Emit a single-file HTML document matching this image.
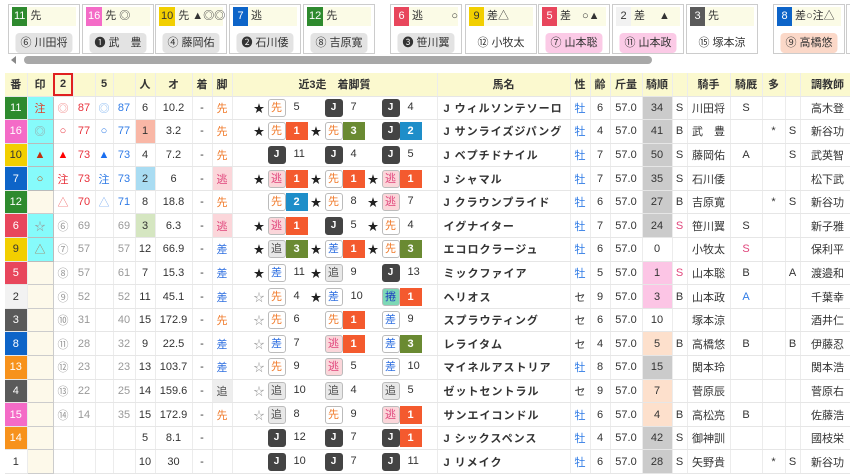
<!DOCTYPE html>
<html><head><meta charset="utf-8"><style>
*{box-sizing:border-box;margin:0;padding:0}
body{width:850px;height:475px;overflow:hidden;background:#fff;font-family:"Liberation Sans","Noto Sans CJK JP",sans-serif;font-size:11px;color:#333;position:relative}
.card{position:absolute;top:4px;width:72px;height:50px;border:1px solid #ccc;background:#fff}
.card .t{position:absolute;left:3px;right:3px;top:2px;height:19px;background:#fbfbe6;font-size:11px;line-height:19px;white-space:nowrap}
.card .t b{display:inline-block;min-width:15px;height:19px;text-align:center;font-weight:normal;margin-right:3px;padding:0 2px}
.card .p{position:absolute;top:28px;left:50%;transform:translateX(-50%);height:20px;line-height:20px;padding:0 5px;border-radius:4px;font-size:11px;white-space:nowrap}
.g{background:#e3e3e3}.pk{background:#fbcae6}.pc{background:#fbd8c8}
.sb{position:absolute;top:56px;left:24px;width:628px;height:8px;border-radius:4px;background:#a8a8a8}
.arr{position:absolute;top:56px;left:11px;width:0;height:0;border-top:4px solid transparent;border-bottom:4px solid transparent;border-right:5px solid #888}
table{position:absolute;left:5px;top:73px;border-collapse:collapse;table-layout:fixed;width:850px}
td,th{height:23.6px;text-align:center;border-bottom:1px solid #e6e6e6;border-right:1px solid #ececec;white-space:nowrap;overflow:hidden;padding:0;font-weight:normal;font-size:11px}
th{background:#fbf9cf;height:23px;font-weight:bold;color:#333}
.n{color:#fff}
.w1{background:#fff;color:#333}.w2{background:#f2f2f2;color:#333}.w3{background:#5a5a5a}.w4{background:#5a5a5a}
.w5,.w6{background:#e8465c}.w7,.w8{background:#0d64c8}.w9,.w10{background:#f2cf00;color:#333}.w11,.w12{background:#2e8a2e}.w13,.w14{background:#f7921c}.w15,.w16{background:#f46bc7}
.cy{background:#86fbfb;border:1px solid #bbb}.cr{background:#fdf9ea;border:1px solid #ccc}
.r{color:#e8323c}.b{color:#2f7be6}.gr{color:#999}.o{color:#f07a2a}.bl{color:#2f6fe0}.pkc{color:#e0457b}
.runs{text-align:left;padding-left:20px}
.s{display:inline-block;width:57px;height:20px;vertical-align:middle;position:relative}
.s i{position:absolute;left:0;top:2px;font-style:normal;font-size:11px;width:13px;text-align:center;color:#222}
.s .bx{position:absolute;left:15px;top:1px;width:18px;height:18px;border:1px solid #bbb;border-radius:3px;line-height:16px;text-align:center;font-size:11px;background:#fff}
.bx.J{background:#444;color:#fff;border-color:#444;font-weight:bold;font-size:10px}
.bx.nige{background:#fbd6da;color:#e0457b}.bx.sen{color:#f07a2a}.bx.sa{color:#2f6fe0}.bx.oi{background:#e8e8e8;color:#555}.bx.ma{background:#7dd8b6;color:#2040c0}
.s .rs{position:absolute;left:33px;top:1px;width:22px;height:18px;line-height:18px;text-align:center;color:#fff;font-weight:bold}
.s .nm{position:absolute;left:41px;top:3px}
.r1{background:#f45a2e}.r2{background:#1e8ec9}.r3{background:#6a8a32}
.nmL{text-align:left;padding-left:6px;font-weight:bold;letter-spacing:1px}
.gy{background:#cbcbcb}.pkb{background:#fcc5e5}.pcb{background:#fde0cc}
</style></head><body>
<div class="card" style="left:8px"><div class="t"><b class="w11 n">11</b>先</div><div class="p g">⑥ 川田将</div></div>
<div class="card" style="left:82px"><div class="t"><b class="w16 n">16</b>先 ◎</div><div class="p g">❶ 武　豊</div></div>
<div class="card" style="left:155px"><div class="t"><b class="w10">10</b>先 ▲◎◎</div><div class="p g">④ 藤岡佑</div></div>
<div class="card" style="left:229px"><div class="t"><b class="w7 n">7</b>逃</div><div class="p g">❷ 石川倭</div></div>
<div class="card" style="left:303px"><div class="t"><b class="w12 n">12</b>先</div><div class="p g">⑧ 吉原寛</div></div>
<div class="card" style="left:390px"><div class="t"><b class="w6 n">6</b>逃<span style="float:right">○</span></div><div class="p g">❸ 笹川翼</div></div>
<div class="card" style="left:465px"><div class="t"><b class="w9">9</b>差△</div><div class="p">⑫ 小牧太</div></div>
<div class="card" style="left:538px"><div class="t"><b class="w5 n">5</b>差　○▲</div><div class="p pk">⑦ 山本聡</div></div>
<div class="card" style="left:612px"><div class="t"><b class="w2">2</b>差　 ▲</div><div class="p pk">⑪ 山本政</div></div>
<div class="card" style="left:686px"><div class="t"><b class="w3 n">3</b>先</div><div class="p">⑮ 塚本涼</div></div>
<div class="card" style="left:773px"><div class="t"><b class="w8 n">8</b>差○注△</div><div class="p pc">⑨ 高橋悠</div></div>
<div class="card" style="left:846px"></div>
<div class="arr"></div><div class="sb"></div>
<table>
<colgroup><col style="width:22px"><col style="width:26px"><col style="width:20px"><col style="width:22px"><col style="width:18px"><col style="width:22px"><col style="width:20px"><col style="width:37px"><col style="width:20px"><col style="width:20px"><col style="width:205px"><col style="width:133px"><col style="width:20px"><col style="width:20px"><col style="width:32px"><col style="width:30px"><col style="width:15px"><col style="width:43px"><col style="width:32px"><col style="width:23px"><col style="width:15px"><col style="width:55px"></colgroup>
<tr><th>番</th><th>印</th><th style="outline:2px solid #e02020;outline-offset:-2px">2</th><th></th><th>5</th><th></th><th>人</th><th>オ</th><th>着</th><th>脚</th><th>近3走　着脚質</th><th>馬名</th><th>性</th><th>齢</th><th>斤量</th><th>騎順</th><th></th><th>騎手</th><th>騎厩</th><th>多</th><th></th><th>調教師</th></tr>
<tr><td class="w11 n">11</td><td class="cy" style="color:#e0402a">注</td><td class="r" style="color:#f08080">◎</td><td class="r">87</td><td class="b" style="color:#7ab0f0">◎</td><td class="b">87</td><td>6</td><td>10.2</td><td>-</td><td class="o">先</td><td class="runs"><span class="s"><i>★</i><span class="bx sen">先</span><span class="nm">5</span></span><span class="s"><span class="bx J">J</span><span class="nm">7</span></span><span class="s"><span class="bx J">J</span><span class="nm">4</span></span></td><td class="nmL">J ウィルソンテソーロ</td><td class="b">牡</td><td>6</td><td>57.0</td><td class="gy">34</td><td>S</td><td>川田将</td><td>S</td><td></td><td></td><td>高木登</td></tr>
<tr><td class="w16 n">16</td><td class="cy gr">◎</td><td class="r">○</td><td class="r">77</td><td class="b">○</td><td class="b">77</td><td style="background:#f9b7a6">1</td><td>3.2</td><td>-</td><td class="o">先</td><td class="runs"><span class="s"><i>★</i><span class="bx sen">先</span><span class="rs r1">1</span></span><span class="s"><i>★</i><span class="bx sen">先</span><span class="rs r3">3</span></span><span class="s"><span class="bx J">J</span><span class="rs r2">2</span></span></td><td class="nmL">J サンライズジパング</td><td class="b">牡</td><td>4</td><td>57.0</td><td class="gy">41</td><td>B</td><td>武　豊</td><td></td><td>*</td><td>S</td><td>新谷功</td></tr>
<tr><td class="w10">10</td><td class="cy" style="color:#c03010">▲</td><td style="color:#f00">▲</td><td class="r">73</td><td style="color:#1a6ef0">▲</td><td class="b">73</td><td>4</td><td>7.2</td><td>-</td><td class="o">先</td><td class="runs"><span class="s"><span class="bx J">J</span><span class="nm">11</span></span><span class="s"><span class="bx J">J</span><span class="nm">4</span></span><span class="s"><span class="bx J">J</span><span class="nm">5</span></span></td><td class="nmL">J ベプチドナイル</td><td class="b">牡</td><td>7</td><td>57.0</td><td class="gy">50</td><td>S</td><td>藤岡佑</td><td>A</td><td></td><td>S</td><td>武英智</td></tr>
<tr><td class="w7 n">7</td><td class="cy" style="color:#c05010">○</td><td class="r">注</td><td class="r">73</td><td class="b">注</td><td class="b">73</td><td style="background:#a9dcf2">2</td><td>6</td><td>-</td><td class="pkc" style="background:#fbd6da">逃</td><td class="runs"><span class="s"><i>★</i><span class="bx nige">逃</span><span class="rs r1">1</span></span><span class="s"><i>★</i><span class="bx sen">先</span><span class="rs r1">1</span></span><span class="s"><i>★</i><span class="bx nige">逃</span><span class="rs r1">1</span></span></td><td class="nmL">J シャマル</td><td class="b">牡</td><td>7</td><td>57.0</td><td class="gy">35</td><td>S</td><td>石川倭</td><td></td><td></td><td></td><td>松下武</td></tr>
<tr><td class="w12 n">12</td><td class="cr"></td><td style="color:#f07070">△</td><td class="r">70</td><td style="color:#80b0f0">△</td><td class="b">71</td><td>8</td><td>18.8</td><td>-</td><td class="o">先</td><td class="runs"><span class="s"><span class="bx sen">先</span><span class="rs r2">2</span></span><span class="s"><i>★</i><span class="bx sen">先</span><span class="nm">8</span></span><span class="s"><i>★</i><span class="bx nige">逃</span><span class="nm">7</span></span></td><td class="nmL">J クラウンプライド</td><td class="b">牡</td><td>6</td><td>57.0</td><td class="gy">27</td><td>B</td><td>吉原寛</td><td></td><td>*</td><td>S</td><td>新谷功</td></tr>
<tr><td class="w6 n">6</td><td class="cy gr">☆</td><td class="gr">⑥</td><td class="gr">69</td><td></td><td class="gr">69</td><td style="background:#d5e6c1">3</td><td>6.3</td><td>-</td><td class="pkc" style="background:#fbd6da">逃</td><td class="runs"><span class="s"><i>★</i><span class="bx nige">逃</span><span class="rs r1">1</span></span><span class="s"><span class="bx J">J</span><span class="nm">5</span></span><span class="s"><i>★</i><span class="bx sen">先</span><span class="nm">4</span></span></td><td class="nmL">イグナイター</td><td class="b">牡</td><td>7</td><td>57.0</td><td class="gy">24</td><td class="pkc">S</td><td>笹川翼</td><td>S</td><td></td><td></td><td>新子雅</td></tr>
<tr><td class="w9">9</td><td class="cy" style="color:#a08060">△</td><td class="gr">⑦</td><td class="gr">57</td><td></td><td class="gr">57</td><td>12</td><td>66.9</td><td>-</td><td class="bl">差</td><td class="runs"><span class="s"><i>★</i><span class="bx oi">追</span><span class="rs r3">3</span></span><span class="s"><i>★</i><span class="bx sa">差</span><span class="rs r1">1</span></span><span class="s"><i>★</i><span class="bx sen">先</span><span class="rs r3">3</span></span></td><td class="nmL">エコロクラージュ</td><td class="b">牡</td><td>6</td><td>57.0</td><td>0</td><td></td><td>小牧太</td><td class="pkc">S</td><td></td><td></td><td>保利平</td></tr>
<tr><td class="w5 n">5</td><td class="cr"></td><td class="gr">⑧</td><td class="gr">57</td><td></td><td class="gr">61</td><td>7</td><td>15.3</td><td>-</td><td class="bl">差</td><td class="runs"><span class="s"><i>★</i><span class="bx sa">差</span><span class="nm">11</span></span><span class="s"><i>★</i><span class="bx oi">追</span><span class="nm">9</span></span><span class="s"><span class="bx J">J</span><span class="nm">13</span></span></td><td class="nmL">ミックファイア</td><td class="b">牡</td><td>5</td><td>57.0</td><td class="pkb">1</td><td class="pkc">S</td><td>山本聡</td><td>B</td><td></td><td>A</td><td>渡邉和</td></tr>
<tr><td class="w2">2</td><td class="cr"></td><td class="gr">⑨</td><td class="gr">52</td><td></td><td class="gr">52</td><td>11</td><td>45.1</td><td>-</td><td class="bl">差</td><td class="runs"><span class="s"><i style="color:#999">☆</i><span class="bx sen">先</span><span class="nm">4</span></span><span class="s"><i>★</i><span class="bx sa">差</span><span class="nm">10</span></span><span class="s"><span class="bx ma">捲</span><span class="rs r1">1</span></span></td><td class="nmL">ヘリオス</td><td>セ</td><td>9</td><td>57.0</td><td class="pkb">3</td><td>B</td><td>山本政</td><td class="b">A</td><td></td><td></td><td>千葉幸</td></tr>
<tr><td class="w3 n">3</td><td class="cr"></td><td class="gr">⑩</td><td class="gr">31</td><td></td><td class="gr">40</td><td>15</td><td>172.9</td><td>-</td><td class="o">先</td><td class="runs"><span class="s"><i style="color:#999">☆</i><span class="bx sen">先</span><span class="nm">6</span></span><span class="s"><span class="bx sen">先</span><span class="rs r1">1</span></span><span class="s"><span class="bx sa">差</span><span class="nm">9</span></span></td><td class="nmL">スプラウティング</td><td>セ</td><td>6</td><td>57.0</td><td>10</td><td></td><td>塚本涼</td><td></td><td></td><td></td><td>酒井仁</td></tr>
<tr><td class="w8 n">8</td><td class="cr"></td><td class="gr">⑪</td><td class="gr">28</td><td></td><td class="gr">32</td><td>9</td><td>22.5</td><td>-</td><td class="bl">差</td><td class="runs"><span class="s"><i style="color:#999">☆</i><span class="bx sa">差</span><span class="nm">7</span></span><span class="s"><span class="bx nige">逃</span><span class="rs r1">1</span></span><span class="s"><span class="bx sa">差</span><span class="rs r3">3</span></span></td><td class="nmL">レライタム</td><td>セ</td><td>4</td><td>57.0</td><td class="pcb">5</td><td>B</td><td>高橋悠</td><td>B</td><td></td><td>B</td><td>伊藤忍</td></tr>
<tr><td class="w13 n">13</td><td class="cr"></td><td class="gr">⑫</td><td class="gr">23</td><td></td><td class="gr">23</td><td>13</td><td>103.7</td><td>-</td><td class="bl">差</td><td class="runs"><span class="s"><i style="color:#999">☆</i><span class="bx sen">先</span><span class="nm">9</span></span><span class="s"><span class="bx nige">逃</span><span class="nm">5</span></span><span class="s"><span class="bx sa">差</span><span class="nm">10</span></span></td><td class="nmL">マイネルアストリア</td><td class="b">牡</td><td>8</td><td>57.0</td><td class="gy">15</td><td></td><td>関本玲</td><td></td><td></td><td></td><td>関本浩</td></tr>
<tr><td class="w4 n">4</td><td class="cr"></td><td class="gr">⑬</td><td class="gr">22</td><td></td><td class="gr">25</td><td>14</td><td>159.6</td><td>-</td><td style="background:#eee;color:#555">追</td><td class="runs"><span class="s"><i style="color:#999">☆</i><span class="bx oi">追</span><span class="nm">10</span></span><span class="s"><span class="bx oi">追</span><span class="nm">4</span></span><span class="s"><span class="bx oi">追</span><span class="nm">5</span></span></td><td class="nmL">ゼットセントラル</td><td>セ</td><td>9</td><td>57.0</td><td class="pcb">7</td><td></td><td>菅原辰</td><td></td><td></td><td></td><td>菅原右</td></tr>
<tr><td class="w15 n">15</td><td class="cr"></td><td class="gr">⑭</td><td class="gr">14</td><td></td><td class="gr">35</td><td>15</td><td>172.9</td><td>-</td><td class="o">先</td><td class="runs"><span class="s"><i style="color:#999">☆</i><span class="bx oi">追</span><span class="nm">8</span></span><span class="s"><span class="bx sen">先</span><span class="nm">9</span></span><span class="s"><span class="bx nige">逃</span><span class="rs r1">1</span></span></td><td class="nmL">サンエイコンドル</td><td class="b">牡</td><td>6</td><td>57.0</td><td class="pcb">4</td><td>B</td><td>高松亮</td><td>B</td><td></td><td></td><td>佐藤浩</td></tr>
<tr><td class="w14 n">14</td><td class="cr"></td><td></td><td></td><td></td><td></td><td>5</td><td>8.1</td><td>-</td><td></td><td class="runs"><span class="s"><span class="bx J">J</span><span class="nm">12</span></span><span class="s"><span class="bx J">J</span><span class="nm">7</span></span><span class="s"><span class="bx J">J</span><span class="rs r1">1</span></span></td><td class="nmL">J シックスペンス</td><td class="b">牡</td><td>4</td><td>57.0</td><td class="gy">42</td><td>S</td><td>御神訓</td><td></td><td></td><td></td><td>國枝栄</td></tr>
<tr><td class="w1">1</td><td class="cr"></td><td></td><td></td><td></td><td></td><td>10</td><td>30</td><td>-</td><td></td><td class="runs"><span class="s"><span class="bx J">J</span><span class="nm">10</span></span><span class="s"><span class="bx J">J</span><span class="nm">7</span></span><span class="s"><span class="bx J">J</span><span class="nm">11</span></span></td><td class="nmL">J リメイク</td><td class="b">牡</td><td>6</td><td>57.0</td><td class="gy">28</td><td>S</td><td>矢野貴</td><td></td><td>*</td><td>S</td><td>新谷功</td></tr>
</table>
</body></html>
